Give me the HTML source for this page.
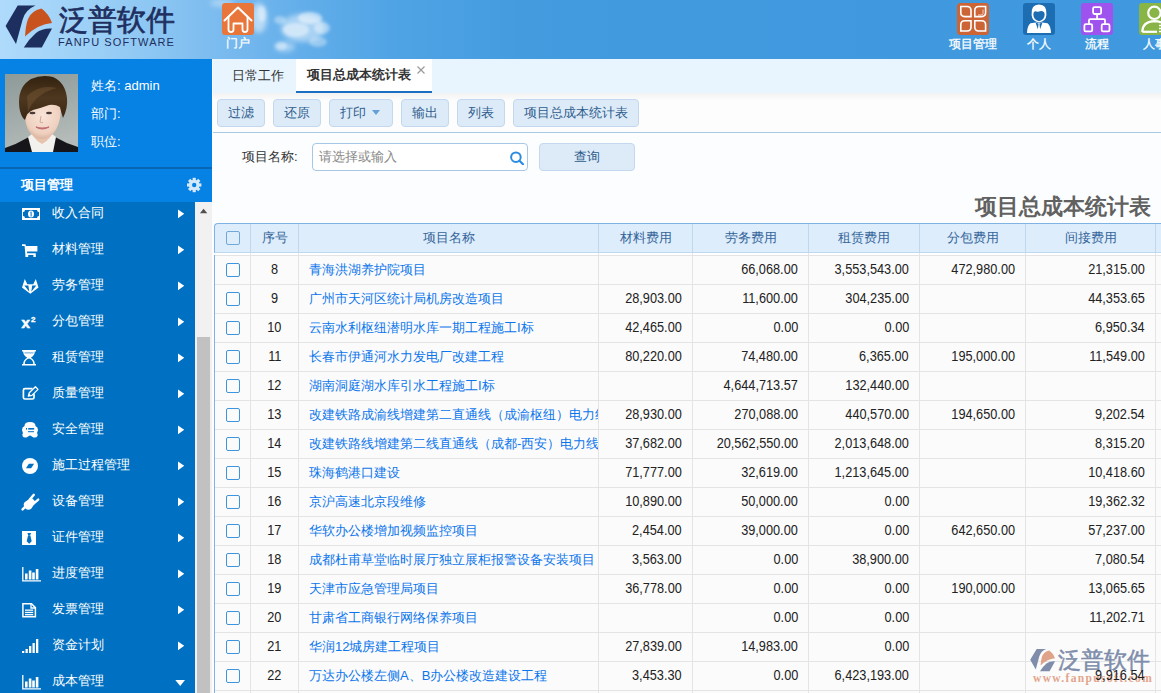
<!DOCTYPE html>
<html><head><meta charset="utf-8">
<style>
*{margin:0;padding:0;box-sizing:border-box}
html,body{width:1161px;height:693px;overflow:hidden;font-family:"Liberation Sans",sans-serif;font-size:13px;background:#fcfdfe}
.abs{position:absolute}
#hdr{left:0;top:0;width:1161px;height:59px;background:linear-gradient(90deg,#afdafb 0px,#9acff6 100px,#80bef0 200px,#63aeea 300px,#4ea3e4 400px,#449cdf 520px,#419ade 620px,#4099de 1161px)}
#side{left:0;top:59px;width:195px;height:634px;background:#0071c2}
#user{left:0;top:59px;width:212px;height:108px;background:#0681e4}
#uline{left:0;top:167px;width:212px;height:2px;background:#0865b6}
#mhead{left:0;top:169px;width:212px;height:33px;background:#0681e4;color:#fff;font-weight:bold;font-size:13px}
#track{left:195px;top:202px;width:17px;height:491px;background:#f1f1f1}
#thumb{left:197px;top:337px;width:13px;height:356px;background:#c1c1c1}
#main{left:213px;top:59px;width:948px;height:634px;background:#fcfdfe}
#tabs{left:213px;top:59px;width:948px;height:34px;background:#e8f5ff}
.tab{position:absolute;top:0;height:34px;line-height:32px;font-size:13px;color:#333}
#tb{left:213px;top:93px;width:948px;height:40px;background:linear-gradient(#f2f2f2,#fdfdfd 8px,#fdfdfd);border-bottom:1px solid #a8c9e4}
.btn{position:absolute;top:6px;height:28px;border:1px solid #c3d8ee;border-radius:4px;background:#ddebf9;color:#2f5d8c;text-align:center;line-height:26px;font-size:13px}
.menu{position:absolute;left:0;width:195px;height:36px;color:#fff;font-size:13px}
.menu .t{position:absolute;left:52px;top:0;line-height:36px}
.menu .ar{position:absolute;left:178px;top:13px;width:0;height:0;border-left:6px solid #fff;border-top:4.5px solid transparent;border-bottom:4.5px solid transparent}
.menu svg{position:absolute;left:22px;top:10px}
table{border-collapse:collapse;table-layout:fixed}
.hc{height:28px;line-height:28px;text-align:center;color:#34659a;font-size:13px}
.cb{width:14px;height:14px;border:1px solid #3d95e0;border-radius:2px}
.num{height:28px;line-height:28px;color:#222;font-size:13px;white-space:nowrap;z-index:2}
.num span{display:inline-block;transform:translateY(-0.5px) scale(0.98,1.1);transform-origin:right center}
.num.c span{transform-origin:center center}
.nm{height:28px;line-height:28px;color:#0b76ec;font-size:13px;white-space:nowrap;overflow:hidden;padding-left:10px}
</style></head><body>
<div id="hdr" class="abs"></div>
<svg class="abs" style="left:0;top:0" width="1161" height="59" viewBox="0 0 1161 59">
<defs>
<radialGradient id="cl" cx="0.5" cy="0.5" r="0.5"><stop offset="0" stop-color="#fff" stop-opacity="0.85"/><stop offset="0.6" stop-color="#fff" stop-opacity="0.45"/><stop offset="1" stop-color="#fff" stop-opacity="0"/></radialGradient>
</defs>
<!-- clouds -->
<defs><filter id="blur" x="-50%" y="-50%" width="200%" height="200%"><feGaussianBlur stdDeviation="2.5"/></filter>
<filter id="blur2" x="-50%" y="-50%" width="200%" height="200%"><feGaussianBlur stdDeviation="1.4"/></filter></defs>
<g filter="url(#blur)" fill="#fff">
<ellipse cx="259" cy="18" rx="8" ry="15" opacity="0.5"/>
<ellipse cx="222" cy="3" rx="12" ry="4" opacity="0.35"/>
<ellipse cx="303" cy="28" rx="22" ry="14" opacity="0.45"/>
<ellipse cx="285" cy="47" rx="10" ry="5" opacity="0.4"/>
</g>
<g filter="url(#blur2)" fill="#fff">
<ellipse cx="310" cy="18" rx="12" ry="6" opacity="0.5"/>
<ellipse cx="296" cy="30" rx="13" ry="7" opacity="0.45"/>
<ellipse cx="322" cy="28" rx="8" ry="6" opacity="0.4"/>
<ellipse cx="318" cy="42" rx="9" ry="5" opacity="0.35"/>
<ellipse cx="262" cy="14" rx="4" ry="8" opacity="0.4"/>
<ellipse cx="280" cy="20" rx="6" ry="4" opacity="0.35"/>
<ellipse cx="281" cy="46" rx="6" ry="4" opacity="0.4"/>
</g>
<!-- logo -->
<path d="M17.7 5.6 H35.5 Q25 10 22.5 20 L16 44 L5.6 26Z" fill="#1d2f5f"/>
<path d="M25 36.5 Q25.5 26 28 19 Q31 11 41.5 8.5 Q49 14 52 23 Q38 24 25 36.5Z" fill="#c9531f"/>
<path d="M23.8 47.5 H41.8 L52 28.5 Q42 28 36 33 Q29 39 23.8 47.5Z" fill="#1d2f5f"/>
<!-- portal icon -->
<rect x="222" y="3" width="32" height="32" rx="3" fill="#e8763b"/>
<path d="M224.5 20.5 L238 7.5 L251.5 20.5" fill="none" stroke="#fff" stroke-width="2" stroke-linecap="round" stroke-linejoin="round"/>
<path d="M228.5 16.5 V29.5 Q228.5 32 231 32 Q233.5 32 233.5 29.5 V23.5 H242.5 V29.5 Q242.5 32 245 32 Q247.5 32 247.5 29.5 V16.5" fill="none" stroke="#fff" stroke-width="1.8" stroke-linejoin="round"/>
<!-- 项目管理 icon -->
<rect x="957" y="3" width="32" height="32" rx="3.5" fill="#cd6435"/>
<g fill="none" stroke="#fff" stroke-width="1.6"><path d="M960.8 6.5 H967 Q971 6.5 971 10.5 V16.6 H964.8 Q960.8 16.6 960.8 12.600000000000001Z"/><path d="M978.8 6.5 H985.6 V12.600000000000001 Q985.6 16.6 981.6 16.6 H974.8 V10.5 Q974.8 6.5 978.8 6.5Z"/><path d="M964.8 20.8 H971 V27 Q971 31 967 31 H960.8 V24.8 Q960.8 20.8 964.8 20.8Z"/><path d="M974.8 20.8 H981.6 Q985.6 20.8 985.6 24.8 V31 H978.8 Q974.8 31 974.8 27Z"/></g>
<path d="M983 9.5 V13.5 Q983 15 981 15 H978" fill="none" stroke="#fff" stroke-width="0.7"/>
<!-- 个人 icon -->
<rect x="1023" y="3" width="32" height="32" rx="3" fill="#1d6db3"/>
<path d="M1027 33 Q1027.3 25.5 1030.5 23.2 L1036 22.6 L1039 23 L1042 22.6 L1047.5 23.2 Q1050.7 25.5 1051 33Z" fill="#fff"/>
<path d="M1035.6 22.8 L1037.9 29.2 L1038.6 23.6 Z M1042.4 22.8 L1040.1 29.2 L1039.4 23.6Z" fill="#1d6db3"/>
<path d="M1031.6 15 Q1030.8 4.6 1039 4.6 Q1047.2 4.6 1046.4 15 Q1046 21.2 1039 22.6 Q1032 21.2 1031.6 15Z" fill="#fff"/>
<path d="M1033.3 14.2 Q1033.4 11.4 1035.4 11.2 Q1037.2 12 1039 11.4 Q1041 10.6 1042.6 11.3 Q1044.6 11.6 1044.7 14.2 Q1044.5 20 1039 21.2 Q1033.5 20 1033.3 14.2Z" fill="#1d6db3"/>
<!-- 流程 icon -->
<rect x="1081" y="3" width="32" height="32" rx="3" fill="#9f53ee"/>
<g fill="none" stroke="#fff" stroke-width="1.8">
<rect x="1093.1" y="7.1" width="8" height="6.9" rx="1.5"/>
<rect x="1084.4" y="24.2" width="7.8" height="7.2" rx="1.5"/>
<rect x="1101.7" y="24.2" width="7.8" height="7.2" rx="1.5"/>
<path d="M1097.1 14 V19.2 M1089 24.2 V20.2 Q1089 19.2 1090 19.2 H1104 Q1105 19.2 1105 20.2 V24.2"/>
</g>
<!-- 人事 icon -->
<rect x="1139" y="3" width="32" height="32" rx="3" fill="#88b546"/>
<circle cx="1154.4" cy="12.8" r="6.2" fill="none" stroke="#fff" stroke-width="2.2"/>
<path d="M1142.3 32 Q1142.3 21.8 1154.4 21.2 Q1158.5 21.2 1161 22.5" fill="none" stroke="#fff" stroke-width="2.2"/>
<path d="M1142.3 31.8 H1157" stroke="#fff" stroke-width="2.2"/>
<path d="M1159 25.5 H1161 M1159 28.5 H1161 M1159 31.5 H1161" stroke="#fff" stroke-width="1.4"/>
</svg>
<div class="abs" style="left:59px;top:1px;font-size:29px;line-height:38px;color:#1e2f60;letter-spacing:0px;-webkit-text-stroke:0.7px #1e2f60">泛普软件</div>
<div class="abs" style="left:58px;top:36px;font-size:11px;line-height:12px;color:#1e2f60;letter-spacing:1.1px">FANPU SOFTWARE</div>
<div class="abs" style="left:226px;top:35.5px;font-size:12px;line-height:14px;color:#fff;-webkit-text-stroke:0.25px #fff">门户</div>
<div class="abs" style="left:949px;top:37px;font-size:12px;line-height:14px;color:#fff;-webkit-text-stroke:0.3px #fff">项目管理</div>
<div class="abs" style="left:1027px;top:37px;font-size:12px;line-height:14px;color:#fff;-webkit-text-stroke:0.3px #fff">个人</div>
<div class="abs" style="left:1085px;top:37px;font-size:12px;line-height:14px;color:#fff;-webkit-text-stroke:0.3px #fff">流程</div>
<div class="abs" style="left:1143px;top:37px;font-size:12px;line-height:14px;color:#fff;white-space:nowrap;-webkit-text-stroke:0.3px #fff">人事</div>

<div id="main" class="abs"></div>
<div id="side" class="abs"></div>
<div id="user" class="abs"></div>
<div id="uline" class="abs"></div>
<div id="mhead" class="abs"><span class="abs" style="left:21px;top:7px">项目管理</span></div>
<div id="track" class="abs"></div>
<div id="thumb" class="abs"></div>
<div class="abs" style="left:0;top:202px;width:195px;height:491px;overflow:hidden">
<div class="menu" style="top:-7px"><span class="t">收入合同</span>
</div>
<div class="menu" style="top:29px"><span class="t">材料管理</span>
</div>
<div class="menu" style="top:65px"><span class="t">劳务管理</span>
</div>
<div class="menu" style="top:101px"><span class="t">分包管理</span>
</div>
<div class="menu" style="top:137px"><span class="t">租赁管理</span>
</div>
<div class="menu" style="top:173px"><span class="t">质量管理</span>
</div>
<div class="menu" style="top:209px"><span class="t">安全管理</span>
</div>
<div class="menu" style="top:245px"><span class="t">施工过程管理</span>
</div>
<div class="menu" style="top:281px"><span class="t">设备管理</span>
</div>
<div class="menu" style="top:317px"><span class="t">证件管理</span>
</div>
<div class="menu" style="top:353px"><span class="t">进度管理</span>
</div>
<div class="menu" style="top:389px"><span class="t">发票管理</span>
</div>
<div class="menu" style="top:425px"><span class="t">资金计划</span>
</div>
<div class="menu" style="top:461px"><span class="t">成本管理</span>
</div>
</div>
<svg class="abs" style="left:0;top:0" width="212" height="693" viewBox="0 0 212 693">
<rect x="22" y="208" width="18" height="12" fill="#fff"/>
<path d="M25 210 H37 Q37 212 39 212 V216 Q37 216 37 218 H25 Q25 216 23 216 V212 Q25 212 25 210Z" fill="#0071c2"/>
<ellipse cx="31" cy="214" rx="3" ry="3.6" fill="#fff"/>
<path d="M30.3 212 L31.6 211.6 V216.6 H30.6 V213 Z" fill="#0071c2"/>
<path d="M22 244.3 H25.4 L26 246 H37.4 V251.6 H27 L27.2 253.3 H35.8 V257 H33.4 V255 H28.2 V257 H25.4 V255 L24.6 246 H22Z" fill="#fff"/>
<path d="M24.8 279 L27.3 284.3 H33.3 L35.8 279 L38.5 287.6 L30.3 293.8 L22 287.6Z" fill="#fff"/>
<path d="M24.3 285.5 H28.4 L29.3 291.8Z M32.2 285.5 H36.3 L31.3 291.8Z" fill="#0071c2"/>
<text x="21.5" y="328" font-family="Liberation Sans" font-weight="bold" font-size="15" fill="#fff" stroke="#fff" stroke-width="0.6">x</text>
<text x="31" y="322" font-family="Liberation Sans" font-weight="bold" font-size="8" fill="#fff" stroke="#fff" stroke-width="0.4">2</text>
<path d="M22 350 H36 V351.5 H34.8 Q34.8 355.5 30.8 357.8 Q34.8 360 34.8 364 H36 V365.6 H22 V364 H23.2 Q23.2 360 27.2 357.8 Q23.2 355.5 23.2 351.5 H22Z" fill="#fff"/>
<path d="M24.8 364 Q24.8 360 29 358.6 Q33.2 360 33.2 364Z" fill="#0071c2"/>
<rect x="24.5" y="352.2" width="9" height="1.3" fill="#0071c2" opacity="0.5"/>
<path d="M32.5 388.6 H25 Q23.4 388.6 23.4 390.2 V397.4 Q23.4 399 25 399 H32.4 Q34 399 34 397.4 V393.6" fill="none" stroke="#fff" stroke-width="1.7"/>
<path d="M28.3 396.2 L29.3 392.8 L35.4 386.8 L38 389.4 L31.9 395.4 Z" fill="#0071c2" stroke="#fff" stroke-width="1.3" stroke-linejoin="round"/>
<path d="M28.6 395.8 L30.6 395.3 L29.2 393.6Z" fill="#fff"/>
<path d="M24.5 426 Q24.5 422 30 422 Q35.5 422 35.5 426 Q38 427 38 430 Q37.5 432 37 433 Q38 434 37.5 436 Q36.5 438 33.5 437.5 L31.5 436.2 Q30 434.8 28.5 436.2 L26.5 437.5 Q23.5 438 22.5 436 Q22 434 23 433 Q22.5 432 22 430 Q22 427 24.5 426Z" fill="#fff"/>
<rect x="26" y="428" width="1" height="1.6" fill="#0071c2"/><rect x="28.2" y="428" width="6" height="1.6" fill="#0071c2"/><rect x="28" y="431.2" width="6" height="1" fill="#0071c2"/>
<circle cx="30" cy="466" r="8" fill="#fff"/>
<path d="M25.9 468.3 L28.9 463.7 H34.1 L31.1 468.3Z" fill="#0071c2"/>
<path d="M22.6 509.4 L26.8 505.2" stroke="#fff" stroke-width="2.4" stroke-linecap="round"/>
<path d="M24.6 502.2 L31.4 497.6 L35.8 502 L31.2 508.8 Q28 511 25.4 508.4 Q22.4 505.4 24.6 502.2Z" fill="#fff"/>
<path d="M29.8 499.6 L33.8 494.8 M33.6 503.6 L38.2 499.6" stroke="#fff" stroke-width="2.4" stroke-linecap="round"/>
<rect x="22" y="531" width="14" height="14" fill="#fff"/>
<path d="M27.4 533 H31 L30.3 535 H28.1Z M28.1 535.3 H30.3 L31.7 541.2 L29.2 543.8 L26.7 541.2Z" fill="#0071c2"/>
<path d="M22.8 567 V580.8 H41" fill="none" stroke="#fff" stroke-width="1.3"/><rect x="25" y="573.5" width="2.6" height="6" fill="#fff"/><rect x="28.8" y="570.5" width="2.6" height="9" fill="#fff"/><rect x="32.2" y="572.5" width="2.6" height="7" fill="#fff"/><rect x="35.8" y="569.0" width="2.6" height="10.5" fill="#fff"/>
<path d="M22.9 603.7 H31.5 L35.4 607.6 V616.8 H22.9Z" fill="none" stroke="#fff" stroke-width="1.5"/>
<path d="M31 603.7 V608 H35.4" fill="none" stroke="#fff" stroke-width="1.3"/>
<rect x="25" y="609.5" width="8.2" height="1.3" fill="#fff"/><rect x="25" y="611.8" width="8.2" height="1.3" fill="#fff"/><rect x="25" y="614" width="8.2" height="1.3" fill="#fff"/>
<rect x="22" y="651" width="2.3" height="2" fill="#fff"/>
<rect x="25.5" y="649" width="2.3" height="4" fill="#fff"/>
<rect x="29" y="646" width="2.3" height="7" fill="#fff"/>
<rect x="32.5" y="643" width="2.3" height="10" fill="#fff"/>
<rect x="36" y="639" width="2.3" height="14" fill="#fff"/>
<path d="M22.8 675 V688.8 H41" fill="none" stroke="#fff" stroke-width="1.3"/><rect x="25" y="681.5" width="2.6" height="6" fill="#fff"/><rect x="28.8" y="678.5" width="2.6" height="9" fill="#fff"/><rect x="32.2" y="680.5" width="2.6" height="7" fill="#fff"/><rect x="35.8" y="677.0" width="2.6" height="10.5" fill="#fff"/>
<g fill="#d6e9f9"><circle cx="194.2" cy="185" r="5.3"/>
<rect x="192.6" y="177.8" width="3.2" height="3.5" transform="rotate(0 194.2 185)"/>
<rect x="192.6" y="177.8" width="3.2" height="3.5" transform="rotate(45 194.2 185)"/>
<rect x="192.6" y="177.8" width="3.2" height="3.5" transform="rotate(90 194.2 185)"/>
<rect x="192.6" y="177.8" width="3.2" height="3.5" transform="rotate(135 194.2 185)"/>
<rect x="192.6" y="177.8" width="3.2" height="3.5" transform="rotate(180 194.2 185)"/>
<rect x="192.6" y="177.8" width="3.2" height="3.5" transform="rotate(225 194.2 185)"/>
<rect x="192.6" y="177.8" width="3.2" height="3.5" transform="rotate(270 194.2 185)"/>
<rect x="192.6" y="177.8" width="3.2" height="3.5" transform="rotate(315 194.2 185)"/>
</g>
<circle cx="194.2" cy="185" r="2.2" fill="#0681e4"/>
<path d="M178 209.4 L184.2 213.8 L178 218.20000000000002Z" fill="#fff"/>
<path d="M178 245.4 L184.2 249.8 L178 254.20000000000002Z" fill="#fff"/>
<path d="M178 281.40000000000003 L184.2 285.8 L178 290.2Z" fill="#fff"/>
<path d="M178 317.40000000000003 L184.2 321.8 L178 326.2Z" fill="#fff"/>
<path d="M178 353.40000000000003 L184.2 357.8 L178 362.2Z" fill="#fff"/>
<path d="M178 389.40000000000003 L184.2 393.8 L178 398.2Z" fill="#fff"/>
<path d="M178 425.40000000000003 L184.2 429.8 L178 434.2Z" fill="#fff"/>
<path d="M178 461.40000000000003 L184.2 465.8 L178 470.2Z" fill="#fff"/>
<path d="M178 497.40000000000003 L184.2 501.8 L178 506.2Z" fill="#fff"/>
<path d="M178 533.4 L184.2 537.8 L178 542.1999999999999Z" fill="#fff"/>
<path d="M178 569.4 L184.2 573.8 L178 578.1999999999999Z" fill="#fff"/>
<path d="M178 605.4 L184.2 609.8 L178 614.1999999999999Z" fill="#fff"/>
<path d="M178 641.4 L184.2 645.8 L178 650.1999999999999Z" fill="#fff"/>
<path d="M199.9 213.2 L207.3 213.2 L203.6 208.8Z" fill="#505050"/>
<path d="M175.3 680 L185 680 L180.2 686Z" fill="#fff"/>
</svg>
<div class="abs" style="left:91px;top:78px;color:#fff;line-height:16px">姓名: admin</div>
<div class="abs" style="left:91px;top:106px;color:#fff;line-height:16px">部门:</div>
<div class="abs" style="left:91px;top:134px;color:#fff;line-height:16px">职位:</div>
<svg class="abs" style="left:5px;top:74px" width="73" height="78" viewBox="0 0 73 78">
<defs>
<linearGradient id="bgp" x1="0" y1="0" x2="0.3" y2="1"><stop offset="0" stop-color="#8d9a98"/><stop offset="0.6" stop-color="#a3adab"/><stop offset="1" stop-color="#b4bbb8"/></linearGradient>
<radialGradient id="skin" cx="0.5" cy="0.4" r="0.65"><stop offset="0" stop-color="#f8e4d8"/><stop offset="0.7" stop-color="#efd0bf"/><stop offset="1" stop-color="#d4ab94"/></radialGradient>
<linearGradient id="hair" x1="0" y1="0" x2="0" y2="1"><stop offset="0" stop-color="#33220f"/><stop offset="0.5" stop-color="#4e371f"/><stop offset="1" stop-color="#382614"/></linearGradient>
</defs>
<rect width="73" height="78" fill="url(#bgp)"/>
<path d="M0 78 V74 Q12 70 22 64 L26 62 L37 72 L48 62 L52 64 Q62 70 73 73 V78Z" fill="#16161a"/>
<path d="M23 63 L27 60 L37 68 L47 60 L51 63 L48 78 H27Z" fill="#f3f1ee"/>
<path d="M26 54 Q26 64 37 70 Q48 64 48 54Z" fill="#e7c3ad"/>
<path d="M20 36 Q19 52 26 60 Q31 65 37 65 Q43 65 48 60 Q55 52 56 36 Q52 26 38 26 Q24 26 20 36Z" fill="url(#skin)"/>
<path d="M18 44 Q14 38 14 28 Q14 12 26 5 Q37 0 48 3 Q60 8 62 24 Q63 34 58 44 Q56 38 55 33 Q50 30 44 31 Q36 34 28 36 Q22 38 20 46Z" fill="url(#hair)"/>
<path d="M22 22 Q34 10 52 14 Q42 16 32 24 Q26 30 23 38Z" fill="#7a5a38" opacity="0.45"/>
<ellipse cx="27.5" cy="39" rx="3" ry="1.3" fill="#4a3a36"/>
<ellipse cx="44" cy="39" rx="3" ry="1.3" fill="#4a3a36"/>
<path d="M36 42 L35 48 Q36 49 38 48.5" stroke="#c99a86" stroke-width="0.8" fill="none"/>
<path d="M31 53 Q37 57 44 53 Q37 55 31 53Z" fill="#c06f72" stroke="#c06f72" stroke-width="1.2"/>
</svg>

<div id="tabs" class="abs">
  <div class="tab" style="left:19px;top:1px">日常工作</div>
  <div class="tab" style="left:83px;width:136px;background:#fff;border-bottom:2px solid #1b6ec2;font-weight:bold;padding-left:11px">项目总成本统计表<svg class="abs" style="left:120px;top:6px" width="10" height="10"><path d="M1.5 1.5 L8.5 8.5 M8.5 1.5 L1.5 8.5" stroke="#9a9a9a" stroke-width="1.2"/></svg></div>
</div>
<div id="tb" class="abs">
  <div class="btn" style="left:4px;width:48px">过滤</div>
  <div class="btn" style="left:60px;width:48px">还原</div>
  <div class="btn" style="left:116px;width:64px;text-align:left;padding-left:10px">打印<span class="abs" style="left:42px;top:10px;border-top:5.5px solid #649fd6;border-left:4.8px solid transparent;border-right:4.8px solid transparent"></span></div>
  <div class="btn" style="left:188px;width:48px">输出</div>
  <div class="btn" style="left:244px;width:48px">列表</div>
  <div class="btn" style="left:300px;width:126px">项目总成本统计表</div>
</div>
<div class="abs" style="left:242px;top:148px;color:#333">项目名称:</div>
<div class="abs" style="left:312px;top:143px;width:216px;height:28px;border:1px solid #a6c7e6;border-radius:4px;background:#fff"><span class="abs" style="left:6px;top:4px;color:#888">请选择或输入</span><svg class="abs" style="left:195px;top:5px" width="16" height="16"><circle cx="7.9" cy="8.2" r="4.8" fill="none" stroke="#2a8de0" stroke-width="2"/><path d="M11.5 11.8 L15 15.2" stroke="#2a8de0" stroke-width="2.2" stroke-linecap="round"/></svg></div>
<div class="abs btn" style="left:539px;top:143px;width:96px">查询</div>
<div class="abs" style="left:975px;top:192px;font-size:22px;font-weight:bold;color:#616161">项目总成本统计表</div>
<div class="abs" style="left:214px;top:223px;width:947px;height:30px;background:#deedfb;border-top:1px solid #7fb3e4;border-left:1px solid #7fb3e4;border-bottom:1px solid #c0d8ee;border-top-left-radius:4px"></div>
<div class="abs" style="left:215px;top:253px;width:946px;height:2px;background:#fff"></div>
<div class="abs" style="left:214px;top:255px;width:947px;height:438px;background:#fbfbfb;border-left:1px solid #7fb3e4"></div>
<div class="abs" style="left:215px;top:255px;width:946px;height:1px;background:#e4e4e4"></div>
<div class="abs" style="left:215px;top:284px;width:946px;height:1px;background:#e4e4e4"></div>
<div class="abs" style="left:215px;top:313px;width:946px;height:1px;background:#e4e4e4"></div>
<div class="abs" style="left:215px;top:342px;width:946px;height:1px;background:#e4e4e4"></div>
<div class="abs" style="left:215px;top:371px;width:946px;height:1px;background:#e4e4e4"></div>
<div class="abs" style="left:215px;top:400px;width:946px;height:1px;background:#e4e4e4"></div>
<div class="abs" style="left:215px;top:429px;width:946px;height:1px;background:#e4e4e4"></div>
<div class="abs" style="left:215px;top:458px;width:946px;height:1px;background:#e4e4e4"></div>
<div class="abs" style="left:215px;top:487px;width:946px;height:1px;background:#e4e4e4"></div>
<div class="abs" style="left:215px;top:516px;width:946px;height:1px;background:#e4e4e4"></div>
<div class="abs" style="left:215px;top:545px;width:946px;height:1px;background:#e4e4e4"></div>
<div class="abs" style="left:215px;top:574px;width:946px;height:1px;background:#e4e4e4"></div>
<div class="abs" style="left:215px;top:603px;width:946px;height:1px;background:#e4e4e4"></div>
<div class="abs" style="left:215px;top:632px;width:946px;height:1px;background:#e4e4e4"></div>
<div class="abs" style="left:215px;top:661px;width:946px;height:1px;background:#e4e4e4"></div>
<div class="abs" style="left:215px;top:690px;width:946px;height:1px;background:#e4e4e4"></div>
<div class="abs" style="left:250px;top:224px;width:1px;height:28px;background:#c0d8ee"></div>
<div class="abs" style="left:250px;top:253px;width:1px;height:440px;background:#e4e4e4"></div>
<div class="abs" style="left:298px;top:224px;width:1px;height:28px;background:#c0d8ee"></div>
<div class="abs" style="left:298px;top:253px;width:1px;height:440px;background:#e4e4e4"></div>
<div class="abs" style="left:598px;top:224px;width:1px;height:28px;background:#c0d8ee"></div>
<div class="abs" style="left:598px;top:253px;width:1px;height:440px;background:#e4e4e4"></div>
<div class="abs" style="left:692px;top:224px;width:1px;height:28px;background:#c0d8ee"></div>
<div class="abs" style="left:692px;top:253px;width:1px;height:440px;background:#e4e4e4"></div>
<div class="abs" style="left:808px;top:224px;width:1px;height:28px;background:#c0d8ee"></div>
<div class="abs" style="left:808px;top:253px;width:1px;height:440px;background:#e4e4e4"></div>
<div class="abs" style="left:919px;top:224px;width:1px;height:28px;background:#c0d8ee"></div>
<div class="abs" style="left:919px;top:253px;width:1px;height:440px;background:#e4e4e4"></div>
<div class="abs" style="left:1025px;top:224px;width:1px;height:28px;background:#c0d8ee"></div>
<div class="abs" style="left:1025px;top:253px;width:1px;height:440px;background:#e4e4e4"></div>
<div class="abs" style="left:1155px;top:224px;width:1px;height:28px;background:#c0d8ee"></div>
<div class="abs" style="left:1155px;top:253px;width:1px;height:440px;background:#e4e4e4"></div>
<div class="abs hc" style="left:251px;top:224px;width:47px">序号</div>
<div class="abs hc" style="left:299px;top:224px;width:299px">项目名称</div>
<div class="abs hc" style="left:599px;top:224px;width:93px">材料费用</div>
<div class="abs hc" style="left:693px;top:224px;width:115px">劳务费用</div>
<div class="abs hc" style="left:809px;top:224px;width:110px">租赁费用</div>
<div class="abs hc" style="left:920px;top:224px;width:105px">分包费用</div>
<div class="abs hc" style="left:1026px;top:224px;width:129px">间接费用</div>
<div class="abs cb" style="left:226px;top:231px;border-color:#70a9d9"></div>
<div class="abs cb" style="left:226px;top:263px"></div>
<div class="abs num c" style="left:251px;top:256px;width:47px;text-align:center"><span>8</span></div>
<div class="abs nm" style="left:299px;top:256px;width:299px">青海洪湖养护院项目</div>
<div class="abs num" style="left:693px;top:256px;width:115px;text-align:right;padding-right:10px"><span>66,068.00</span></div>
<div class="abs num" style="left:809px;top:256px;width:110px;text-align:right;padding-right:10px"><span>3,553,543.00</span></div>
<div class="abs num" style="left:920px;top:256px;width:105px;text-align:right;padding-right:10px"><span>472,980.00</span></div>
<div class="abs num" style="left:1026px;top:256px;width:129px;text-align:right;padding-right:10px"><span>21,315.00</span></div>
<div class="abs cb" style="left:226px;top:292px"></div>
<div class="abs num c" style="left:251px;top:285px;width:47px;text-align:center"><span>9</span></div>
<div class="abs nm" style="left:299px;top:285px;width:299px">广州市天河区统计局机房改造项目</div>
<div class="abs num" style="left:599px;top:285px;width:93px;text-align:right;padding-right:10px"><span>28,903.00</span></div>
<div class="abs num" style="left:693px;top:285px;width:115px;text-align:right;padding-right:10px"><span>11,600.00</span></div>
<div class="abs num" style="left:809px;top:285px;width:110px;text-align:right;padding-right:10px"><span>304,235.00</span></div>
<div class="abs num" style="left:1026px;top:285px;width:129px;text-align:right;padding-right:10px"><span>44,353.65</span></div>
<div class="abs cb" style="left:226px;top:321px"></div>
<div class="abs num c" style="left:251px;top:314px;width:47px;text-align:center"><span>10</span></div>
<div class="abs nm" style="left:299px;top:314px;width:299px">云南水利枢纽潜明水库一期工程施工I标</div>
<div class="abs num" style="left:599px;top:314px;width:93px;text-align:right;padding-right:10px"><span>42,465.00</span></div>
<div class="abs num" style="left:693px;top:314px;width:115px;text-align:right;padding-right:10px"><span>0.00</span></div>
<div class="abs num" style="left:809px;top:314px;width:110px;text-align:right;padding-right:10px"><span>0.00</span></div>
<div class="abs num" style="left:1026px;top:314px;width:129px;text-align:right;padding-right:10px"><span>6,950.34</span></div>
<div class="abs cb" style="left:226px;top:350px"></div>
<div class="abs num c" style="left:251px;top:343px;width:47px;text-align:center"><span>11</span></div>
<div class="abs nm" style="left:299px;top:343px;width:299px">长春市伊通河水力发电厂改建工程</div>
<div class="abs num" style="left:599px;top:343px;width:93px;text-align:right;padding-right:10px"><span>80,220.00</span></div>
<div class="abs num" style="left:693px;top:343px;width:115px;text-align:right;padding-right:10px"><span>74,480.00</span></div>
<div class="abs num" style="left:809px;top:343px;width:110px;text-align:right;padding-right:10px"><span>6,365.00</span></div>
<div class="abs num" style="left:920px;top:343px;width:105px;text-align:right;padding-right:10px"><span>195,000.00</span></div>
<div class="abs num" style="left:1026px;top:343px;width:129px;text-align:right;padding-right:10px"><span>11,549.00</span></div>
<div class="abs cb" style="left:226px;top:379px"></div>
<div class="abs num c" style="left:251px;top:372px;width:47px;text-align:center"><span>12</span></div>
<div class="abs nm" style="left:299px;top:372px;width:299px">湖南洞庭湖水库引水工程施工I标</div>
<div class="abs num" style="left:693px;top:372px;width:115px;text-align:right;padding-right:10px"><span>4,644,713.57</span></div>
<div class="abs num" style="left:809px;top:372px;width:110px;text-align:right;padding-right:10px"><span>132,440.00</span></div>
<div class="abs cb" style="left:226px;top:408px"></div>
<div class="abs num c" style="left:251px;top:401px;width:47px;text-align:center"><span>13</span></div>
<div class="abs nm" style="left:299px;top:401px;width:299px">改建铁路成渝线增建第二直通线（成渝枢纽）电力线路工程</div>
<div class="abs num" style="left:599px;top:401px;width:93px;text-align:right;padding-right:10px"><span>28,930.00</span></div>
<div class="abs num" style="left:693px;top:401px;width:115px;text-align:right;padding-right:10px"><span>270,088.00</span></div>
<div class="abs num" style="left:809px;top:401px;width:110px;text-align:right;padding-right:10px"><span>440,570.00</span></div>
<div class="abs num" style="left:920px;top:401px;width:105px;text-align:right;padding-right:10px"><span>194,650.00</span></div>
<div class="abs num" style="left:1026px;top:401px;width:129px;text-align:right;padding-right:10px"><span>9,202.54</span></div>
<div class="abs cb" style="left:226px;top:437px"></div>
<div class="abs num c" style="left:251px;top:430px;width:47px;text-align:center"><span>14</span></div>
<div class="abs nm" style="left:299px;top:430px;width:299px">改建铁路线增建第二线直通线（成都-西安）电力线路工程</div>
<div class="abs num" style="left:599px;top:430px;width:93px;text-align:right;padding-right:10px"><span>37,682.00</span></div>
<div class="abs num" style="left:693px;top:430px;width:115px;text-align:right;padding-right:10px"><span>20,562,550.00</span></div>
<div class="abs num" style="left:809px;top:430px;width:110px;text-align:right;padding-right:10px"><span>2,013,648.00</span></div>
<div class="abs num" style="left:1026px;top:430px;width:129px;text-align:right;padding-right:10px"><span>8,315.20</span></div>
<div class="abs cb" style="left:226px;top:466px"></div>
<div class="abs num c" style="left:251px;top:459px;width:47px;text-align:center"><span>15</span></div>
<div class="abs nm" style="left:299px;top:459px;width:299px">珠海鹤港口建设</div>
<div class="abs num" style="left:599px;top:459px;width:93px;text-align:right;padding-right:10px"><span>71,777.00</span></div>
<div class="abs num" style="left:693px;top:459px;width:115px;text-align:right;padding-right:10px"><span>32,619.00</span></div>
<div class="abs num" style="left:809px;top:459px;width:110px;text-align:right;padding-right:10px"><span>1,213,645.00</span></div>
<div class="abs num" style="left:1026px;top:459px;width:129px;text-align:right;padding-right:10px"><span>10,418.60</span></div>
<div class="abs cb" style="left:226px;top:495px"></div>
<div class="abs num c" style="left:251px;top:488px;width:47px;text-align:center"><span>16</span></div>
<div class="abs nm" style="left:299px;top:488px;width:299px">京沪高速北京段维修</div>
<div class="abs num" style="left:599px;top:488px;width:93px;text-align:right;padding-right:10px"><span>10,890.00</span></div>
<div class="abs num" style="left:693px;top:488px;width:115px;text-align:right;padding-right:10px"><span>50,000.00</span></div>
<div class="abs num" style="left:809px;top:488px;width:110px;text-align:right;padding-right:10px"><span>0.00</span></div>
<div class="abs num" style="left:1026px;top:488px;width:129px;text-align:right;padding-right:10px"><span>19,362.32</span></div>
<div class="abs cb" style="left:226px;top:524px"></div>
<div class="abs num c" style="left:251px;top:517px;width:47px;text-align:center"><span>17</span></div>
<div class="abs nm" style="left:299px;top:517px;width:299px">华软办公楼增加视频监控项目</div>
<div class="abs num" style="left:599px;top:517px;width:93px;text-align:right;padding-right:10px"><span>2,454.00</span></div>
<div class="abs num" style="left:693px;top:517px;width:115px;text-align:right;padding-right:10px"><span>39,000.00</span></div>
<div class="abs num" style="left:809px;top:517px;width:110px;text-align:right;padding-right:10px"><span>0.00</span></div>
<div class="abs num" style="left:920px;top:517px;width:105px;text-align:right;padding-right:10px"><span>642,650.00</span></div>
<div class="abs num" style="left:1026px;top:517px;width:129px;text-align:right;padding-right:10px"><span>57,237.00</span></div>
<div class="abs cb" style="left:226px;top:553px"></div>
<div class="abs num c" style="left:251px;top:546px;width:47px;text-align:center"><span>18</span></div>
<div class="abs nm" style="left:299px;top:546px;width:299px">成都杜甫草堂临时展厅独立展柜报警设备安装项目</div>
<div class="abs num" style="left:599px;top:546px;width:93px;text-align:right;padding-right:10px"><span>3,563.00</span></div>
<div class="abs num" style="left:693px;top:546px;width:115px;text-align:right;padding-right:10px"><span>0.00</span></div>
<div class="abs num" style="left:809px;top:546px;width:110px;text-align:right;padding-right:10px"><span>38,900.00</span></div>
<div class="abs num" style="left:1026px;top:546px;width:129px;text-align:right;padding-right:10px"><span>7,080.54</span></div>
<div class="abs cb" style="left:226px;top:582px"></div>
<div class="abs num c" style="left:251px;top:575px;width:47px;text-align:center"><span>19</span></div>
<div class="abs nm" style="left:299px;top:575px;width:299px">天津市应急管理局项目</div>
<div class="abs num" style="left:599px;top:575px;width:93px;text-align:right;padding-right:10px"><span>36,778.00</span></div>
<div class="abs num" style="left:693px;top:575px;width:115px;text-align:right;padding-right:10px"><span>0.00</span></div>
<div class="abs num" style="left:809px;top:575px;width:110px;text-align:right;padding-right:10px"><span>0.00</span></div>
<div class="abs num" style="left:920px;top:575px;width:105px;text-align:right;padding-right:10px"><span>190,000.00</span></div>
<div class="abs num" style="left:1026px;top:575px;width:129px;text-align:right;padding-right:10px"><span>13,065.65</span></div>
<div class="abs cb" style="left:226px;top:611px"></div>
<div class="abs num c" style="left:251px;top:604px;width:47px;text-align:center"><span>20</span></div>
<div class="abs nm" style="left:299px;top:604px;width:299px">甘肃省工商银行网络保养项目</div>
<div class="abs num" style="left:693px;top:604px;width:115px;text-align:right;padding-right:10px"><span>0.00</span></div>
<div class="abs num" style="left:809px;top:604px;width:110px;text-align:right;padding-right:10px"><span>0.00</span></div>
<div class="abs num" style="left:1026px;top:604px;width:129px;text-align:right;padding-right:10px"><span>11,202.71</span></div>
<div class="abs cb" style="left:226px;top:640px"></div>
<div class="abs num c" style="left:251px;top:633px;width:47px;text-align:center"><span>21</span></div>
<div class="abs nm" style="left:299px;top:633px;width:299px">华润12城房建工程项目</div>
<div class="abs num" style="left:599px;top:633px;width:93px;text-align:right;padding-right:10px"><span>27,839.00</span></div>
<div class="abs num" style="left:693px;top:633px;width:115px;text-align:right;padding-right:10px"><span>14,983.00</span></div>
<div class="abs num" style="left:809px;top:633px;width:110px;text-align:right;padding-right:10px"><span>0.00</span></div>
<div class="abs cb" style="left:226px;top:669px"></div>
<div class="abs num c" style="left:251px;top:662px;width:47px;text-align:center"><span>22</span></div>
<div class="abs nm" style="left:299px;top:662px;width:299px">万达办公楼左侧A、B办公楼改造建设工程</div>
<div class="abs num" style="left:599px;top:662px;width:93px;text-align:right;padding-right:10px"><span>3,453.30</span></div>
<div class="abs num" style="left:693px;top:662px;width:115px;text-align:right;padding-right:10px"><span>0.00</span></div>
<div class="abs num" style="left:809px;top:662px;width:110px;text-align:right;padding-right:10px"><span>6,423,193.00</span></div>
<div class="abs num" style="left:1026px;top:662px;width:129px;text-align:right;padding-right:10px"><span>9,916.54</span></div>
<svg class="abs" style="left:1028px;top:646px;z-index:1" width="30" height="30" viewBox="0 0 56 52">
<g transform="translate(-1.5,-2.2) scale(1.0)">
<path d="M17.7 5.6 H35.5 Q25 10 22.5 20 L16 44 L5.6 26Z" fill="#7f8daa"/>
<path d="M25 36.5 Q25.5 26 28 19 Q31 11 41.5 8.5 Q49 14 52 23 Q38 24 25 36.5Z" fill="#e0a389"/>
<path d="M23.8 47.5 H41.8 L52 28.5 Q42 28 36 33 Q29 39 23.8 47.5Z" fill="#7f8daa"/>
</g>
</svg>
<div class="abs" style="z-index:1;left:1058px;top:645px;font-size:23px;line-height:30px;color:#7f8dab;white-space:nowrap;-webkit-text-stroke:0.5px #7f8dab">泛普软件</div>
<div class="abs" style="z-index:1;left:1033px;top:672px;font-family:'Liberation Serif',serif;font-size:11.5px;line-height:12px;color:#e3a58c;letter-spacing:1.35px;font-weight:bold;white-space:nowrap">www.fanpusoft.com</div>

</body></html>
